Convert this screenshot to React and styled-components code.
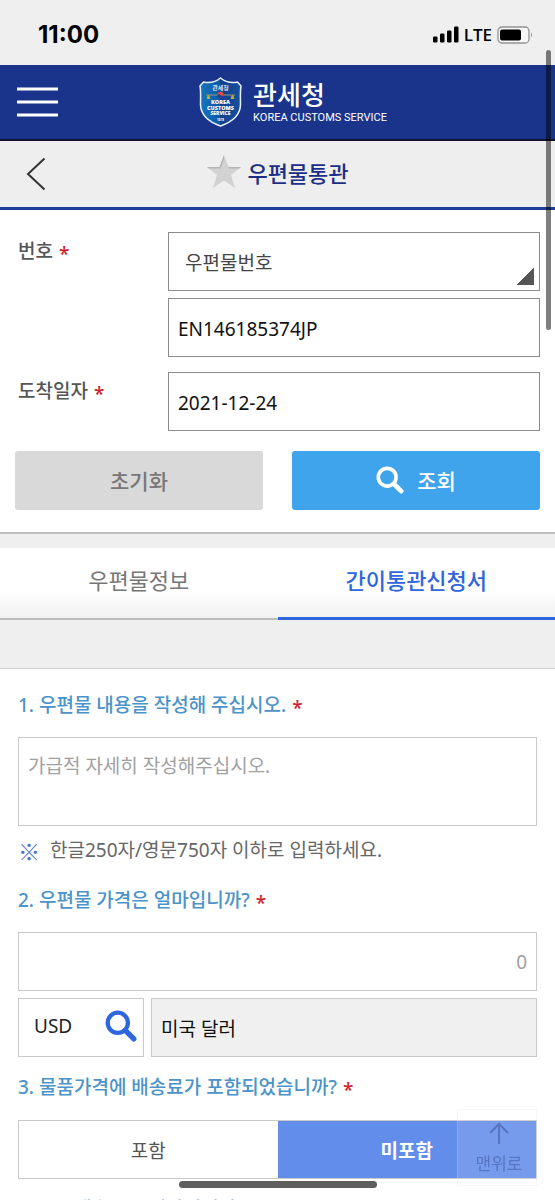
import React, { useState } from 'react';
import styled, { createGlobalStyle } from 'styled-components';

const GlobalStyle = createGlobalStyle`
	*, *::before, *::after {
		box-sizing: border-box;
	}
	html, body, #root {
		height: 100%;
	}
	body {
		margin: 0;
		overflow: hidden;
		background: #fff;
	}
	body, button, input, select, textarea {
		font-family: 'Noto Sans CJK KR', sans-serif;
		font-size: 19px;
	}
`;

const Screen = styled.div`
	height: 100%;
	overflow: hidden;
	color: #444;
`;

const StatusBar = styled.div`
	height: 65px;
	padding: 4px 22px 0 38px;
	display: flex;
	align-items: center;
	justify-content: space-between;
	background: #efefef;
	color: #000;
`;

const Clock = styled.time`
	font-family: Inter, sans-serif;
	font-size: 24px;
	line-height: 24px;
	font-weight: 700;
`;

const Signals = styled.div`
	display: flex;
	align-items: center;
	gap: 5px;
`;

const Network = styled.span`
	font-family: 'Open Sans', sans-serif;
	font-size: 17px;
	line-height: 20px;
	font-weight: 600;
`;

const Header = styled.header`
	height: 76px;
	padding: 0 17px;
	display: grid;
	grid-template-columns: 60px 1fr 60px;
	align-items: center;
	background: #1a348c;
	border-bottom: 2px solid #10142f;
`;

const IconButton = styled.button`
	padding: 0;
	border: 0;
	background: none;
	display: flex;
	align-items: center;
	justify-self: start;
	color: #2f66e0;
`;

const Brand = styled.a`
	display: flex;
	align-items: center;
	justify-content: center;
	gap: 11px;
	padding-left: 31px;
	color: #fff;
	text-decoration: none;
`;

const BrandText = styled.span`
	display: flex;
	flex-direction: column;
	white-space: nowrap;
`;

const BrandKo = styled.strong`
	font-size: 26px;
	line-height: 32px;
	font-weight: 500;
`;

const BrandEn = styled.span`
	font-family: 'Liberation Sans Narrow', Roboto, sans-serif;
	font-size: 11px;
	line-height: 16px;
	font-weight: 400;
`;

const TitleBar = styled.div`
	height: 69px;
	padding: 0 26px;
	display: grid;
	grid-template-columns: 50px 1fr 50px;
	align-items: center;
	background: #eee;
	border-bottom: 3px solid #1d3f9b;
`;

const PageTitle = styled.h1`
	margin: 0;
	padding-bottom: 5px;
	display: flex;
	align-items: center;
	justify-content: center;
	gap: 5px;
	color: #1b2f86;
	font-size: 22px;
	line-height: 30px;
	font-weight: 500;
`;

const SearchForm = styled.form`
	padding: 22px 15px;
	border-bottom: 2px solid #bdbdbd;
`;

const Field = styled.div`
	display: grid;
	grid-template-columns: 153px 1fr;
	align-items: start;
	margin-bottom: 15px;
`;

const Label = styled.label`
	padding: 4px 0 0 3px;
	line-height: 28px;
	font-weight: 500;
	color: #555;
`;

const Star = styled.span`
	margin-left: 6px;
	font-family: 'Noto Sans', sans-serif;
	font-size: 19px;
	line-height: 1;
	font-weight: 500;
	vertical-align: -3px;
	color: #d0202e;
`;

const Stack = styled.div`
	display: flex;
	flex-direction: column;
	gap: 7px;
`;

const Select = styled.select`
	width: 100%;
	height: 59px;
	padding: 0 16px;
	appearance: none;
	border: 1px solid #8c8c8c;
	border-radius: 0;
	color: #444;
	background: linear-gradient(135deg, transparent 50%, #555 50%) no-repeat right 5px bottom 5px / 18px 18px #fff;
`;

const Input = styled.input`
	width: 100%;
	min-width: 0;
	height: 59px;
	padding: ${p => (p.$light ? '0 9px' : '3px 9px 0')};
	border: 1px solid ${p => (p.$light ? '#cacaca' : '#8c8c8c')};
	border-radius: 0;
	outline: 0;
	color: #111;
	background: ${p => (p.readOnly ? '#f0f0f0' : '#fff')};
	font-family: 'Noto Sans', 'Noto Sans CJK KR', sans-serif;
	text-align: ${p => p.$align || 'left'};

	&::placeholder {
		color: #a0a0a0;
	}
`;

const Actions = styled.div`
	display: grid;
	grid-template-columns: 1fr 1fr;
	gap: 29px;
	padding-top: 5px;
`;

const Action = styled.button`
	height: 59px;
	padding: 0 0 2px;
	border: 0;
	border-radius: 3px;
	display: flex;
	align-items: center;
	justify-content: center;
	gap: 13px;
	font-size: 21px;
	font-weight: 500;
	color: ${p => (p.$primary ? '#fff' : '#777')};
	background: ${p => (p.$primary ? '#3fa4ec' : '#d9d9d9')};
`;

const Tabs = styled.div`
	padding-top: 14px;
	display: grid;
	grid-template-columns: 1fr 1fr;
	background: #efefef;
`;

const Tab = styled.button`
	height: 72px;
	padding: 0 0 8px;
	border: 0;
	border-bottom: ${p => (p.$active ? '3px solid #2f66dc' : '2px solid #bebebe')};
	background: linear-gradient(#fff 60%, #f1f1f1);
	font-size: 22px;
	font-weight: ${p => (p.$active ? 500 : 400)};
	color: ${p => (p.$active ? '#2f66dc' : '#777')};
`;

const Strip = styled.div`
	height: 49px;
	background: #efefef;
	border-bottom: 1px solid #d2d2d2;
`;

const Section = styled.section`
	padding: 0 18px;
`;

const Question = styled.h2`
	margin: 0;
	padding: ${p => (p.$tight ? 16 : 22)}px 0 ${p => (p.$tight ? 19 : 18)}px;
	font-family: 'Noto Sans', 'Noto Sans CJK KR', sans-serif;
	font-size: 19px;
	line-height: 28px;
	font-weight: 500;
	color: #4b93c9;
`;

const Textarea = styled.textarea`
	display: block;
	width: 100%;
	height: 89px;
	padding: 14px 9px;
	border: 1px solid #cacaca;
	border-radius: 0;
	resize: none;
	outline: 0;
	font-family: 'Noto Sans', 'Noto Sans CJK KR', sans-serif;
	line-height: 28px;

	&::placeholder {
		color: #a0a0a0;
	}
`;

const Note = styled.p`
	margin: 0;
	padding-top: 10px;
	display: flex;
	gap: 12px;
	font-family: 'Noto Sans', 'Noto Sans CJK KR', sans-serif;
	line-height: 28px;
	color: #666;
`;

const NoteMark = styled.span`
	width: 20px;
	font-family: 'Noto Sans CJK KR', sans-serif;
	font-size: 22px;
	text-align: center;
	color: #4e6ad3;
`;

const Currency = styled.div`
	display: grid;
	grid-template-columns: 126px 1fr;
	gap: 7px;
	margin-top: 7px;
`;

const CurrencyCode = styled.div`
	height: 59px;
	padding: 0 6px 3px 15px;
	display: flex;
	align-items: center;
	justify-content: space-between;
	border: 1px solid #cacaca;
	color: #222;
	font-family: 'Noto Sans', sans-serif;
`;

const Choices = styled.div`
	display: grid;
	grid-template-columns: 1fr 1fr;
	border: 1px solid #cacaca;
`;

const Choice = styled.label`
	height: 57px;
	display: flex;
	align-items: center;
	justify-content: center;
	color: ${p => (p.$checked ? '#fff' : '#555')};
	background: ${p => (p.$checked ? '#628dea' : '#fff')};
	font-weight: ${p => (p.$checked ? 700 : 400)};
`;

const Radio = styled.input`
	appearance: none;
	width: 0;
	height: 0;
	margin: 0;
`;

const TopButton = styled.button`
	position: fixed;
	right: 18px;
	bottom: 14px;
	width: 80px;
	height: 77px;
	padding: 2px 0 0 4px;
	border: 1px solid rgba(225, 225, 225, 0.25);
	display: flex;
	flex-direction: column;
	align-items: center;
	justify-content: center;
	gap: 6px;
	background: rgba(255, 255, 255, 0.13);
	color: rgba(62, 86, 155, 0.55);
	font-size: 17px;
	line-height: 26px;
`;

const ScrollThumb = styled.div`
	position: fixed;
	top: 50px;
	right: 4px;
	width: 5px;
	height: 280px;
	border-radius: 3px;
	background: rgba(0, 0, 0, 0.5);
`;

const HomeIndicator = styled.div`
	position: fixed;
	bottom: 12px;
	left: 50%;
	width: 198px;
	height: 7px;
	border-radius: 4px;
	background: #5e5e5e;
	transform: translateX(-50%);
`;

const Emblem = () => (
	<svg width="43" height="50" viewBox="0 0 43 50" aria-hidden="true">
		<defs>
			<linearGradient id="shield" x1="0" x2="1">
				<stop offset="0" stopColor="#1676bd" />
				<stop offset="0.5" stopColor="#0d58a6" />
				<stop offset="0.5" stopColor="#123f8d" />
				<stop offset="1" stopColor="#16519d" />
			</linearGradient>
		</defs>
		<path
			d="M21.500 1C16 5.500 9 6 4.500 5L1 9C2 14 1.500 20 1.500 28C2 39 10 45 21.500 49C33 45 41 39 41.500 28C41.500 20 41 14 42 9L38.500 5C34 6 27 5.500 21.500 1Z"
			fill="url(#shield)"
			stroke="#e8f1fa"
			strokeWidth="1.500"
		/>
		<g fill="#fff" textAnchor="middle" fontFamily="'Open Sans', 'Noto Sans CJK KR', sans-serif">
			<text x="21.500" y="13" fontSize="6" fontWeight="500">관세청</text>
			<text x="21.500" y="27" fontSize="5.500" fontWeight="800">KOREA</text>
			<text x="21.500" y="32.500" fontSize="5.500" fontWeight="800">CUSTOMS</text>
			<text x="21.500" y="37.500" fontSize="5" fontWeight="800">SERVICE</text>
			<text x="21.500" y="43.500" fontSize="3" fontWeight="700">1878</text>
		</g>
		<path d="M7 18H36" stroke="#9b9a78" strokeWidth="1" />
		<path d="M9.500 18L8 21.500H11ZM33.500 18L32 21.500H35Z" fill="#b4b13f" stroke="#b4b13f" />
		<circle cx="21.500" cy="18" r="3.200" fill="#2d3f91" />
		<path d="M18.300 18A3.200 3.200 0 0 1 24.700 18Q23 20 21.500 18T18.300 18Z" fill="#e24a3a" />
	</svg>
);

const SearchIcon = ({ size, width }) => (
	<svg width={size} height={size} viewBox="0 0 30 30" fill="none" stroke="currentColor" strokeWidth={width} aria-hidden="true">
		<circle cx="12" cy="12" r="9.500" />
		<path d="M19 19L27 27" strokeWidth={width + 1} strokeLinecap="round" />
	</svg>
);

const Required = () => <Star>*</Star>;

const App = () => {
	const [number, setNumber] = useState('EN146185374JP');
	const [date, setDate] = useState('2021-12-24');
	const [tab, setTab] = useState('form');
	const [shipping, setShipping] = useState('excluded');

	return (
		<Screen>
			<GlobalStyle />
			<StatusBar>
				<Clock>11:00</Clock>
				<Signals>
					<svg width="26" height="17" viewBox="0 0 26 17" aria-hidden="true">
						<rect x="0" y="10.500" width="4.500" height="6" rx="1.200" />
						<rect x="7" y="7.500" width="4.500" height="9" rx="1.200" />
						<rect x="14" y="4.500" width="4.500" height="12" rx="1.200" />
						<rect x="21" y="0.500" width="4.500" height="16" rx="1.200" />
					</svg>
					<Network>LTE</Network>
					<svg width="36" height="18" viewBox="0 0 36 18" aria-hidden="true">
						<rect x="1" y="1" width="31" height="16" rx="4" fill="#f8f8f8" stroke="#929292" strokeWidth="1.300" />
						<rect x="3" y="3.500" width="21" height="11" rx="2" />
						<path d="M34 6.500Q36 9 34 11.500Z" fill="#929292" />
					</svg>
				</Signals>
			</StatusBar>

			<Header>
				<IconButton type="button" aria-label="메뉴">
					<svg width="41" height="30" viewBox="0 0 41 30" stroke="#fff" strokeWidth="3" aria-hidden="true">
						<path d="M0 2H41M0 15H41M0 28H41" />
					</svg>
				</IconButton>
				<Brand href="#">
					<Emblem />
					<BrandText>
						<BrandKo>관세청</BrandKo>
						<BrandEn>KOREA CUSTOMS SERVICE</BrandEn>
					</BrandText>
				</Brand>
			</Header>

			<TitleBar>
				<IconButton type="button" aria-label="뒤로">
					<svg width="20" height="34" viewBox="0 0 20 34" fill="none" stroke="#333" strokeWidth="2" aria-hidden="true">
						<path d="M18.500 1.500L2 17L18.500 32.500" />
					</svg>
				</IconButton>
				<PageTitle>
					<svg width="36" height="35" viewBox="0 0 36 35" aria-hidden="true">
						<path d="M18 1L22.500 13H35L25 21L29 34L18 26.500L7 34L11 21L1 13H13.500Z" fill="#d2d2d2" />
						<path d="M18 1L13.500 13H1L3 14.500H14.500L18 5Z M22.500 13H35L33 14.500H22.500Z" fill="#b4b4b4" />
					</svg>
					우편물통관
				</PageTitle>
			</TitleBar>

			<SearchForm onSubmit={e => e.preventDefault()}>
				<Field>
					<Label htmlFor="kind">번호<Required /></Label>
					<Stack>
						<Select id="kind">
							<option>우편물번호</option>
						</Select>
						<Input aria-label="우편물번호" value={number} onChange={e => setNumber(e.target.value)} />
					</Stack>
				</Field>
				<Field>
					<Label htmlFor="date">도착일자<Required /></Label>
					<Input id="date" value={date} onChange={e => setDate(e.target.value)} />
				</Field>
				<Actions>
					<Action type="button">초기화</Action>
					<Action type="submit" $primary>
						<SearchIcon size={28} width={4} />
						조회
					</Action>
				</Actions>
			</SearchForm>

			<Tabs role="tablist">
				<Tab role="tab" $active={tab === 'info'} onClick={() => setTab('info')}>우편물정보</Tab>
				<Tab role="tab" $active={tab === 'form'} onClick={() => setTab('form')}>간이통관신청서</Tab>
			</Tabs>
			<Strip />

			<Section>
				<Question><label htmlFor="content">1. 우편물 내용을 작성해 주십시오.</label><Required /></Question>
				<Textarea id="content" placeholder="가급적 자세히 작성해주십시오." />
				<Note>
					<NoteMark>※</NoteMark>
					한글250자/영문750자 이하로 입력하세요.
				</Note>

				<Question><label htmlFor="price">2. 우편물 가격은 얼마입니까?</label><Required /></Question>
				<Input id="price" $light $align="right" placeholder="0" />
				<Currency>
					<CurrencyCode>
						USD
						<IconButton type="button" aria-label="통화 검색">
							<SearchIcon size={32} width={4} />
						</IconButton>
					</CurrencyCode>
					<Input $light aria-label="통화" value="미국 달러" readOnly />
				</Currency>

				<Question $tight>3. 물품가격에 배송료가 포함되었습니까?<Required /></Question>
				<Choices>
					<Choice $checked={shipping === 'included'}>
						<Radio type="radio" name="shipping" checked={shipping === 'included'} onChange={() => setShipping('included')} />
						포함
					</Choice>
					<Choice $checked={shipping === 'excluded'}>
						<Radio type="radio" name="shipping" checked={shipping === 'excluded'} onChange={() => setShipping('excluded')} />
						미포함
					</Choice>
				</Choices>
				<Question $tight>4. 물품배송료는 얼마입니까?</Question>
			</Section>

			<TopButton type="button">
				<svg width="20" height="22" viewBox="0 0 20 22" fill="none" stroke="currentColor" strokeWidth="2" aria-hidden="true">
					<path d="M10 22V2M1 11L10 2L19 11" />
				</svg>
				맨위로
			</TopButton>
			<ScrollThumb />
			<HomeIndicator />
		</Screen>
	);
};

export default App;
